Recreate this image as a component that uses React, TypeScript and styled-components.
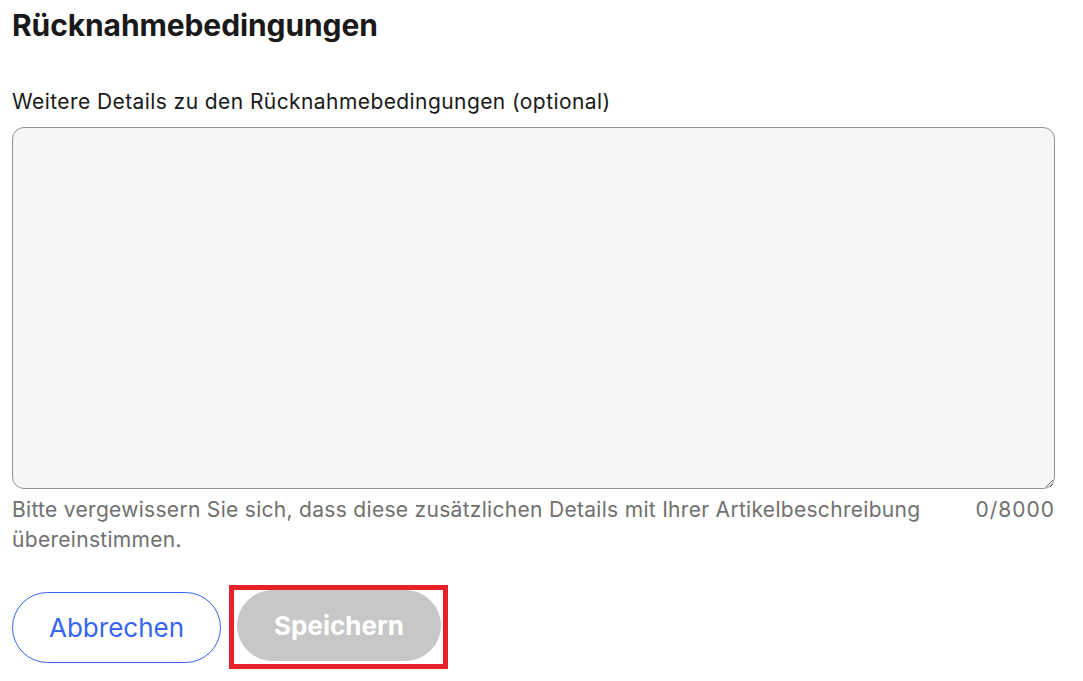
import React from "react";
import styled, { createGlobalStyle } from "styled-components";

const Global = createGlobalStyle`
  html, body { margin: 0; padding: 0; background: #ffffff; }
  body { font-family: Inter, "Open Sans", Arial, sans-serif; color: #191919; }
  * { box-sizing: border-box; }
`;

const Page = styled.div`
  padding: 7px 28px 0 12px;
  display: flex;
  flex-direction: column;
`;

const Title = styled.h2`
  margin: 0;
  font-size: 30px;
  line-height: 36px;
  font-weight: 700;
  letter-spacing: -0.1px;
  color: #191919;
`;

const Label = styled.label`
  margin-top: 45px;
  font-size: 21px;
  line-height: 28px;
  letter-spacing: 0.42px;
  color: #191919;
`;

const TextArea = styled.textarea`
  margin-top: 11px;
  width: 100%;
  height: 362px;
  border: 1px solid #8f8f8f;
  border-radius: 12px;
  background: #f6f6f6;
  resize: vertical;
  font: inherit;
  padding: 12px 16px;
  outline: none;
`;

const HelpRow = styled.div`
  margin-top: 6px;
  display: flex;
  justify-content: space-between;
  gap: 50px;
  font-size: 21px;
  line-height: 30px;
  letter-spacing: 0.3px;
  color: #707070;
`;

const Counter = styled.span`
  white-space: nowrap;
  letter-spacing: 1px;
`;

const Actions = styled.div`
  margin-top: 30px;
  display: flex;
  gap: 8px;
  align-items: center;
`;

const Highlight = styled.span`
  display: inline-flex;
  border: 5px solid #e8202a;
  padding: 0 2px 3px 3px;
`;

const Button = styled.button<{ $primary?: boolean }>`
  height: 71px;
  border-radius: 36px;
  font-family: inherit;
  font-size: 26px;
  padding: 0 36px;
  cursor: pointer;
  border: 1px solid ${(p) => (p.$primary ? "#c7c7c7" : "#3665f3")};
  background: ${(p) => (p.$primary ? "#c7c7c7" : "#ffffff")};
  color: ${(p) => (p.$primary ? "#ffffff" : "#3665f3")};
  font-weight: ${(p) => (p.$primary ? 700 : 400)};
`;

export default function App() {
  return (
    <>
      <Global />
      <Page>
        <Title>Rücknahmebedingungen</Title>
        <Label>Weitere Details zu den Rücknahmebedingungen (optional)</Label>
        <TextArea />
        <HelpRow>
          <span>
            Bitte vergewissern Sie sich, dass diese zusätzlichen Details mit Ihrer Artikelbeschreibung übereinstimmen.
          </span>
          <Counter>0/8000</Counter>
        </HelpRow>
        <Actions>
          <Button>Abbrechen</Button>
          <Highlight>
            <Button $primary>Speichern</Button>
          </Highlight>
        </Actions>
      </Page>
    </>
  );
}
